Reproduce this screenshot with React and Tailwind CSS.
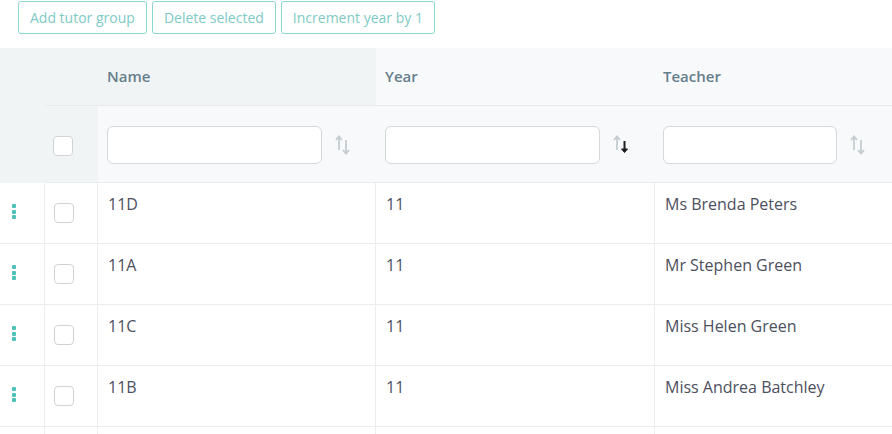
import React from "react";

const rows = [
  { name: "11D", year: "11", teacher: "Ms Brenda Peters" },
  { name: "11A", year: "11", teacher: "Mr Stephen Green" },
  { name: "11C", year: "11", teacher: "Miss Helen Green" },
  { name: "11B", year: "11", teacher: "Miss Andrea Batchley" },
  { name: "", year: "", teacher: "" },
];

const SortIcon = ({ active }) => (
  <svg width="20" height="22" viewBox="0 0 20 22" className="shrink-0">
    <g stroke="#c3ccd1" strokeWidth="1.8" fill="none">
      <path d="M5 16V3" />
      <path d="M2 6l3-3.5L8 6" />
    </g>
    {active ? (
      <g stroke="#1b1f22" strokeWidth="2" fill="#1b1f22">
        <path d="M12.5 7v10" />
        <path d="M9.5 15l3 3.5 3-3.5z" strokeWidth="1" />
      </g>
    ) : (
      <g stroke="#c3ccd1" strokeWidth="1.8" fill="none">
        <path d="M12 6v13" />
        <path d="M9 16l3 3.5 3-3.5" />
      </g>
    )}
  </svg>
);

const Checkbox = () => (
  <div className="w-5 h-5 rounded-[4px] border border-[#cfd3d6] bg-white" />
);

const DragHandle = () => (
  <div className="flex flex-col gap-[1.5px]">
    <span className="w-[4px] h-[4px] bg-[#4fc1b8] rounded-[1px]" />
    <span className="w-[4px] h-[4px] bg-[#4fc1b8] rounded-[1px]" />
    <span className="w-[4px] h-[4px] bg-[#4fc1b8] rounded-[1px]" />
  </div>
);

const Button = ({ children }) => (
  <button className="h-[33px] px-[11px] rounded-[3px] border-[1.5px] border-[#8ad6d0] text-[14px] text-[#7ecac5] bg-white">
    {children}
  </button>
);

export default function App() {
  return (
    <div
      className="w-[892px] h-[434px] overflow-hidden bg-white"
      style={{ fontFamily: '"Open Sans", "Liberation Sans", sans-serif' }}
    >
      {/* toolbar */}
      <div className="flex gap-[5px] pl-[18px] pt-[1px] h-[48px]">
        <Button>Add tutor group</Button>
        <Button>Delete selected</Button>
        <Button>Increment year by 1</Button>
      </div>

      {/* header */}
      <div className="flex">
        <div className="w-[45px] shrink-0 bg-[#f1f4f5]" />
        <div className="flex-1 flex flex-col">
          <div className="flex h-[58px] border-b border-[#e6eaec]">
            <div className="w-[331px] shrink-0 bg-[#f1f4f5] flex items-center pl-[62px] text-[15px] font-semibold text-[#667e8b]">
              Name
            </div>
            <div className="w-[279px] shrink-0 bg-[#f8f9fa] flex items-center pl-[9px] text-[15px] font-semibold text-[#667e8b]">
              Year
            </div>
            <div className="flex-1 bg-[#f8f9fa] flex items-center pl-[8px] text-[15px] font-semibold text-[#667e8b]">
              Teacher
            </div>
          </div>
          <div className="flex h-[77px] border-b border-[#e8ecee]">
            <div className="w-[53px] shrink-0 bg-[#f1f4f5] flex items-center pl-[8px] pt-[4px]">
              <Checkbox />
            </div>
            <div className="w-[278px] shrink-0 bg-[#f8f9fa] flex items-center pl-[9px] gap-[12px] pt-[2px]">
              <div className="w-[215px] h-[38px] rounded-[6px] border border-[#d3d8db] bg-white" />
              <SortIcon />
            </div>
            <div className="w-[279px] shrink-0 bg-[#f8f9fa] flex items-center pl-[9px] gap-[12px] pt-[2px]">
              <div className="w-[215px] h-[38px] rounded-[6px] border border-[#d3d8db] bg-white" />
              <SortIcon active />
            </div>
            <div className="flex-1 bg-[#f8f9fa] flex items-center pl-[8px] gap-[12px] pt-[2px]">
              <div className="w-[174px] h-[38px] rounded-[6px] border border-[#d3d8db] bg-white" />
              <SortIcon />
            </div>
          </div>
        </div>
      </div>

      {/* body */}
      {rows.map((r, i) => (
        <div key={i} className="flex h-[61px] border-b border-[#e9edef]">
          <div className="w-[45px] shrink-0 border-r border-[#e9edef] pl-[12px] pt-[21px]">
            {r.name && <DragHandle />}
          </div>
          <div className="w-[53px] shrink-0 border-r border-[#e9edef] pl-[9px] pt-[20px]">
            {r.name && <Checkbox />}
          </div>
          <div className="w-[278px] shrink-0 border-r border-[#e9edef] pl-[10px] pt-[9px] text-[16px] text-[#4d5060]">
            {r.name}
          </div>
          <div className="w-[279px] shrink-0 border-r border-[#e9edef] pl-[10px] pt-[9px] text-[16px] text-[#4d5060]">
            {r.year}
          </div>
          <div className="flex-1 pl-[10px] pt-[9px] text-[16px] text-[#4d5060]">
            {r.teacher}
          </div>
        </div>
      ))}
    </div>
  );
}
